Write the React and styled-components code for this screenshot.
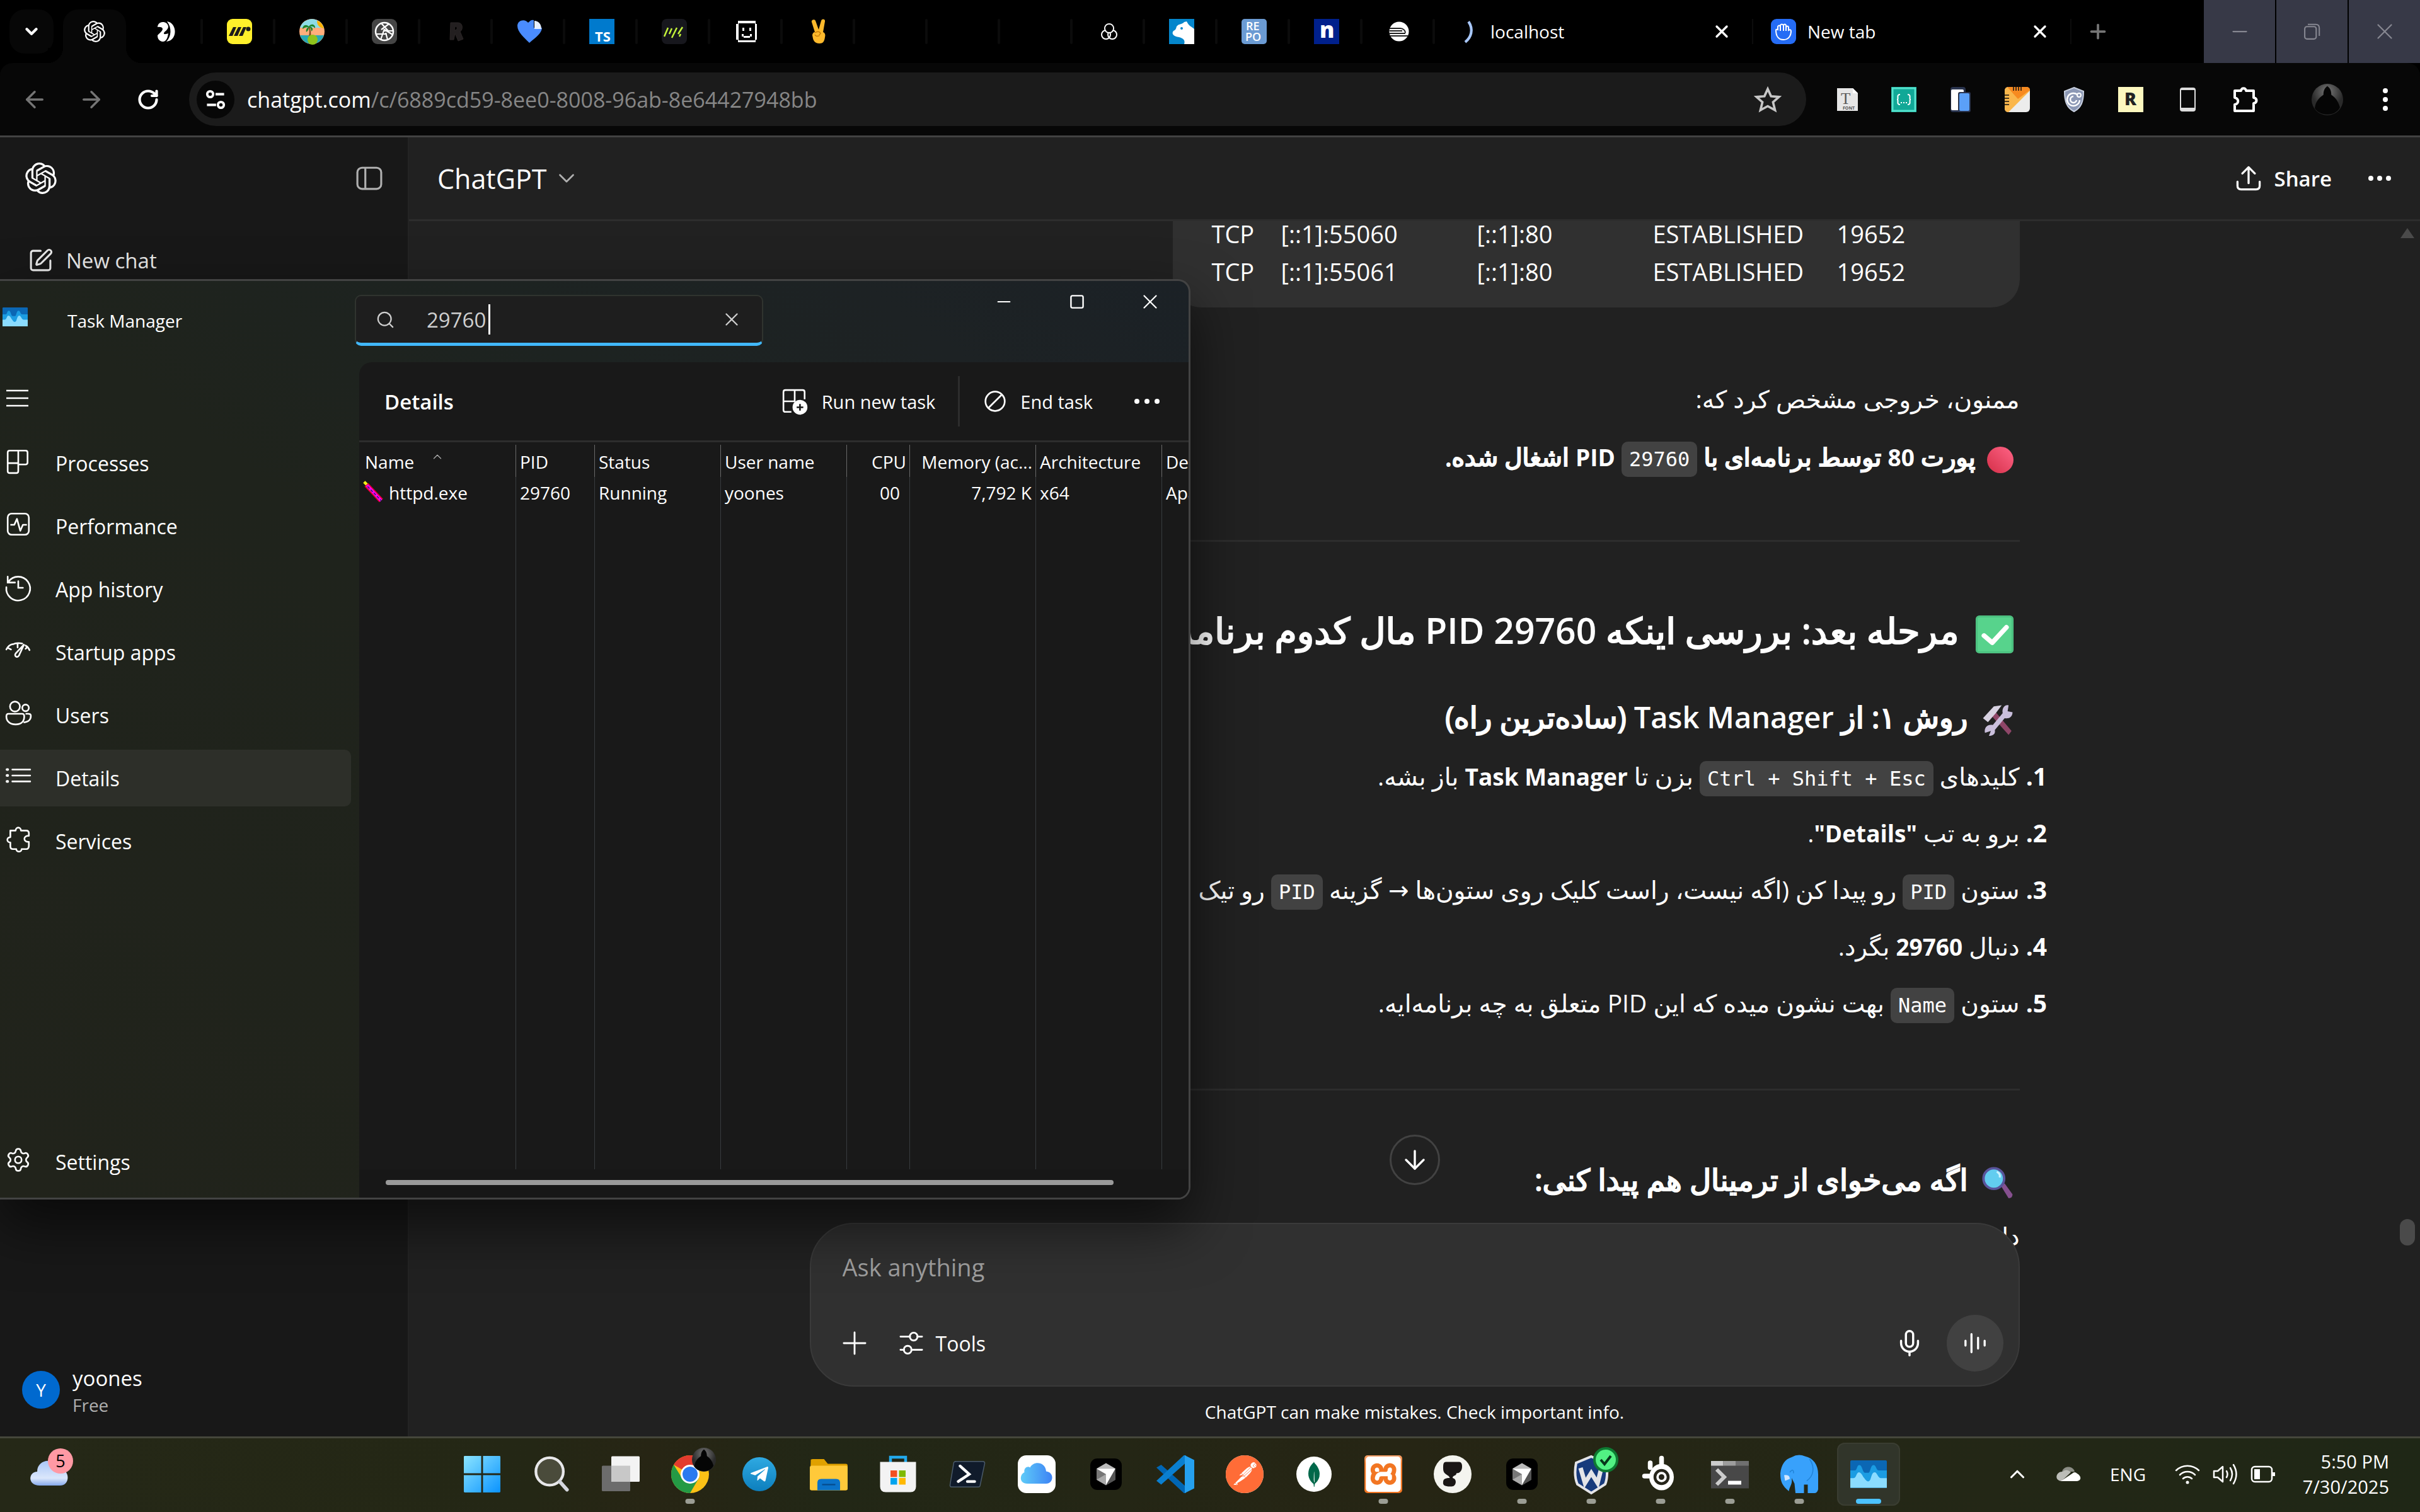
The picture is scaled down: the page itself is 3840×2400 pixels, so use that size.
import React from 'react';
import styled, { createGlobalStyle, css } from 'styled-components';
import {
  ChevronDown, ChevronUp, ArrowLeft, ArrowRight, ArrowDown, X, Plus, Minus, Search,
  Star, RotateCw, Mic, Settings, SquarePen,
} from 'lucide-react';
import { SiOpenai, SiPostman, SiMongodb, SiXampp } from 'react-icons/si';
import { FaTelegramPlane } from 'react-icons/fa';

const GlobalStyle = createGlobalStyle`
  *, *::before, *::after { box-sizing: border-box; }
  body {
    margin: 0;
    background: #000;
    color: #fff;
    font-family: "Open Sans", "Noto Sans", "DejaVu Sans", sans-serif;
    font-size: 33px;
    overflow: hidden;
  }
  button, input, textarea { font: inherit; color: inherit; }
  svg { display: block; flex: none; overflow: visible; }
`;

const Desktop = styled.div`
  position: relative;
  display: flex;
  flex-direction: column;
  min-height: 100vh;
  overflow: hidden;
`;

const PlainButton = styled.button`
  display: flex;
  align-items: center;
  justify-content: center;
  padding: 0;
  border: 0;
  background: none;
  cursor: pointer;
`;

/* ---------- Browser tab strip ---------- */

const TabStrip = styled.header`
  display: flex;
  height: 100px;
  background: #000;
`;

const TabSearchCell = styled.div`
  display: flex;
  align-items: center;
  justify-content: center;
  width: 100px;
`;

const TabSearchButton = styled(PlainButton)`
  width: 70px;
  height: 70px;
  border-radius: 24px;
  background: #070707;
`;

const Tabs = styled.nav`
  display: flex;
  flex: 1;
`;

const PinnedTab = styled(PlainButton)`
  position: relative;
  width: 115px;
  height: 100px;

  &::after {
    content: '';
    position: absolute;
    right: 0;
    top: 30px;
    width: 4px;
    height: 40px;
    border-radius: 2px;
    background: #0b0b0b;
  }
`;

const ActiveTab = styled(PlainButton)`
  position: relative;
  width: 100px;
  height: 85px;
  margin: 15px 7px 0 0;
  padding-bottom: 15px;
  border-radius: 24px 24px 0 0;
  background: #070707;

  &::before, &::after {
    content: '';
    position: absolute;
    bottom: 0;
    width: 24px;
    height: 24px;
  }
  &::before { right: 100%; background: radial-gradient(circle at 0 0, #000 24px, #070707 24px); }
  &::after { left: 100%; background: radial-gradient(circle at 100% 0, #000 24px, #070707 24px); }
`;

const WideTab = styled.div`
  display: flex;
  align-items: center;
  width: 505px;
  padding: 0 32px 0 28px;
  border-right: 2px solid #0b0b0b;
  border-image: linear-gradient(#000 30%, #0c0c0c 30%, #0c0c0c 70%, #000 70%) 1;
  font-size: 28px;
  gap: 18px;

  span { flex: 1; }
`;

const NewTabButton = styled(PlainButton)`
  width: 84px;
  color: #757575;
`;

const WindowButtons = styled.div`
  display: flex;
  gap: 2px;
`;

const WindowButton = styled(PlainButton)`
  width: 113px;
  height: 100px;
  background: #373947;
  color: #868791;
`;

/* ---------- Browser toolbar ---------- */

const Toolbar = styled.div`
  display: flex;
  align-items: center;
  height: 118px;
  padding: 0 12px 3px 10px;
  border-radius: 20px 20px 0 0;
  background: #070707;
  box-shadow: inset 0 -3px #424242;
`;

const ToolButton = styled(PlainButton)`
  width: 90px;
  height: 85px;
  color: ${(p) => (p.$muted ? '#757575' : '#fff')};
`;

const Omnibox = styled.div`
  display: flex;
  align-items: center;
  flex: 1;
  height: 85px;
  margin: 0 20px;
  padding: 0 40px 0 12px;
  gap: 20px;
  border-radius: 43px;
  background: #1b1b1b;
`;

const SiteInfo = styled(PlainButton)`
  width: 60px;
  height: 60px;
  border-radius: 50%;
  background: #070707;
`;

const Url = styled.a`
  flex: 1;
  color: #868686;
  font-size: 34px;
  text-decoration: none;

  b { color: #fff; font-weight: 400; }
`;

const ProfileButton = styled(PlainButton)`
  width: 98px;
  margin-left: 38px;
`;

const MenuButton = styled(PlainButton)`
  width: 86px;
`;

/* ---------- Chat page ---------- */

const Page = styled.div`
  display: flex;
  flex: 1;
  min-height: 0;
  background: #212121;
`;

const Sidebar = styled.aside`
  display: flex;
  flex-direction: column;
  width: 649px;
  border-right: 2px solid #242424;
  background: #181818;
`;

const SidebarTop = styled.div`
  display: flex;
  align-items: center;
  justify-content: space-between;
  height: 130px;
  padding: 0 40px;
`;

const NewChat = styled.a`
  display: flex;
  align-items: center;
  gap: 20px;
  height: 90px;
  margin-top: 20px;
  padding: 0 44px;
  color: #e8e8e8;
  text-decoration: none;
`;

const Account = styled(PlainButton)`
  justify-content: flex-start;
  gap: 20px;
  margin-top: auto;
  padding: 0 35px 32px;
  text-align: left;
`;

const Avatar = styled.span`
  display: flex;
  align-items: center;
  justify-content: center;
  width: 60px;
  height: 60px;
  border-radius: 50%;
  background: #0069cf;
  font-size: 28px;
`;

const AccountText = styled.span`
  display: flex;
  flex-direction: column;
  line-height: 48px;

  small {
    color: #afafaf;
    font-size: 28px;
    line-height: 36px;
  }
`;

const Main = styled.main`
  position: relative;
  display: flex;
  flex-direction: column;
  flex: 1;
  min-width: 0;
`;

const MainHeader = styled.div`
  display: flex;
  align-items: center;
  justify-content: space-between;
  height: 133px;
  padding: 0 46px 0 45px;
  border-bottom: 3px solid #2d2d2d;
`;

const ModelButton = styled(PlainButton)`
  gap: 10px;
  font-size: 43px;
`;

const HeaderActions = styled.div`
  display: flex;
  gap: 58px;
`;

const ShareButton = styled(PlainButton)`
  gap: 18px;
  font-weight: 600;
`;

const Scroller = styled.div`
  position: relative;
  display: flex;
  justify-content: center;
  flex: 1;
  min-height: 0;
  overflow: hidden;
`;

const Thread = styled.article`
  width: 100%;
  max-width: 1920px;
  height: 0;
  font-size: 38px;
`;

const Bubble = styled.div`
  display: flex;
  flex-direction: column;
  gap: 20px;
  width: 70%;
  margin: 0 0 110px auto;
  padding: 0 62px 37px;
  border-radius: 0 0 45px 45px;
  background: #303030;
`;

const BubbleRow = styled.div`
  display: grid;
  grid-template-columns: 110px 311px 279px 292px 1fr;
  line-height: 40px;
`;

const faText = css`
  font-family: "Open Sans", "DejaVu Sans", sans-serif;
`;

const Rtl = styled.div`
  ${faText}
  direction: rtl;
  font-size: 39px;
  line-height: 70px;
  white-space: nowrap;
`;

/* Persian letters are thickened with a stroke; Latin runs inside use a true bold face. */
const heavy = css`
  font-weight: 400;
  -webkit-text-stroke: 2px currentColor;
`;

const En = styled.b`
  font-size: ${(p) => p.$size || 37}px;
  font-weight: ${(p) => p.$weight || 700};
  -webkit-text-stroke: 0;
`;

const Para = styled.p`
  height: 70px;
  margin: 0 0 22px;
  ${(p) => p.$bold && heavy}
`;

const Rule = styled.hr`
  height: 3px;
  margin: ${(p) => p.$top || 97}px 0 ${(p) => p.$bottom || 100}px;
  border: 0;
  background: #2d2d2d;
`;

const Title = styled.h2`
  height: 80px;
  margin: 0 0 63px;
  font-size: 57px;
  line-height: 80px;
  ${heavy}
`;

const Subtitle = styled.h3`
  height: 70px;
  margin: 0 0 ${(p) => p.$gap || 24}px;
  font-size: 47px;
  ${heavy}
`;

const Emoji = styled.svg`
  display: inline-block;
  width: ${(p) => p.$size || 50}px;
  height: ${(p) => p.$size || 50}px;
  margin: 0 10px 0 ${(p) => p.$gap || 22}px;
  vertical-align: middle;
`;

const Steps = styled.ol`
  display: flex;
  flex-direction: column;
  gap: 20px;
  margin: 0;
  padding: 0;
  list-style-position: outside;
`;

const Step = styled.li`
  height: 70px;
  &::marker { font-weight: 700; }
`;

const Code = styled.code`
  padding: 9px 12px;
  border-radius: 10px;
  background: #424242;
  font-family: "DejaVu Sans Mono", "Liberation Mono", monospace;
  font-size: 32px;
  font-weight: 400;
  line-height: 32px;
  direction: ltr;
  unicode-bidi: isolate;
  -webkit-text-stroke: 0;
`;

const ScrollRail = styled.div`
  position: absolute;
  top: 0;
  right: 0;
  bottom: 210px;
  display: flex;
  flex-direction: column;
  align-items: center;
  width: 40px;
  padding-top: 10px;
  color: #4a4a4a;
`;

const ScrollThumb = styled.div`
  width: 24px;
  height: 42px;
  margin: 1556px 0 auto;
  border-radius: 12px;
  background: #4a4a4a;
`;

const Dock = styled.div`
  position: absolute;
  left: 0;
  right: 0;
  bottom: 0;
  display: flex;
  flex-direction: column;
  align-items: center;
`;

const ScrollDown = styled(PlainButton)`
  width: 80px;
  height: 80px;
  margin-bottom: 60px;
  border: 3px solid #424242;
  border-radius: 50%;
  background: #212121;
`;

const Composer = styled.form`
  display: flex;
  flex-direction: column;
  justify-content: space-between;
  width: 100%;
  max-width: 1920px;
  height: 260px;
  padding: 38px 24px 22px 50px;
  border: 2px solid #3a3a3a;
  border-radius: 70px;
  background: #303030;
`;

const Prompt = styled.input`
  width: 100%;
  height: 60px;
  padding: 0;
  border: 0;
  outline: 0;
  background: none;
  font-size: 38px;

  &::placeholder { color: #9e9e9e; opacity: 1; }
`;

const ComposerRow = styled.div`
  display: flex;
  align-items: center;
  height: 90px;
  gap: 52px;
`;

const ToolsButton = styled(PlainButton)`
  gap: 20px;
  margin-right: auto;
  font-size: 32px;
`;

const VoiceButton = styled(PlainButton)`
  width: 90px;
  height: 90px;
  margin-left: -16px;
  border-radius: 50%;
  background: #414141;
`;

const Disclaimer = styled.p`
  height: 79px;
  margin: 0;
  font-size: 28px;
  line-height: 80px;
`;

/* ---------- Task Manager window ---------- */

const TaskWindow = styled.section`
  position: absolute;
  left: 0;
  top: 443px;
  display: flex;
  flex-direction: column;
  width: 1889px;
  height: 1461px;
  border: 3px solid #434343;
  border-left: 0;
  border-radius: 0 20px 20px 0;
  background: linear-gradient(to bottom left, #1b2126 0, #1d2224 14%, #1d2321 30%, #1f231c 50%, #21231b 100%);
  box-shadow: 0 40px 90px rgba(0, 0, 0, 0.6);
  overflow: hidden;
`;

const TitleBar = styled.div`
  display: flex;
  align-items: flex-start;
  height: 129px;
`;

const AppName = styled.div`
  display: flex;
  align-items: center;
  gap: 63px;
  width: 563px;
  height: 126px;
  padding-left: 4px;
  font-size: 28px;

  svg { margin-bottom: 12px; }
`;

const SearchField = styled.label`
  display: flex;
  align-items: center;
  width: 648px;
  height: 81px;
  margin-top: 22px;
  padding: 0 31px;
  border: 2px solid #30342f;
  border-bottom: 5px solid #41b8fb;
  border-radius: 10px;
  background: #1e1e1e;
  color: #cfcfcf;
`;

const SearchInput = styled.input`
  width: 98px;
  margin-left: 50px;
  padding: 0;
  border: 0;
  outline: 0;
  background: none;
`;

const Caret = styled.span`
  width: 3px;
  height: 48px;
  background: #fff;
`;

const ClearButton = styled(PlainButton)`
  margin-left: auto;
`;

const Caption = styled.div`
  display: flex;
  margin-left: auto;
  padding-right: 3px;
`;

const CaptionButton = styled(PlainButton)`
  width: 116px;
  height: 66px;
`;

const WindowBody = styled.div`
  display: flex;
  flex: 1;
  min-height: 0;
`;

const SideNav = styled.nav`
  display: flex;
  flex-direction: column;
  gap: 10px;
  width: 570px;
  padding-bottom: 12px;
  font-size: 32px;
`;

const NavItem = styled.button`
  display: flex;
  align-items: center;
  gap: 38px;
  width: 557px;
  height: 90px;
  margin-top: ${(p) => (p.$last ? 'auto' : 0)};
  padding: 0 8px;
  border: 0;
  border-radius: 0 10px 10px 0;
  background: ${(p) => (p.$active ? '#2d2f29' : 'transparent')};
  cursor: pointer;

  svg { margin-bottom: 6px; }
`;

const MenuItem = styled(NavItem)`
  height: 105px;
  padding-top: 14px;
`;

const DetailsPane = styled.div`
  display: flex;
  flex-direction: column;
  flex: 1;
  min-width: 0;
  border-radius: 20px 0 0 0;
  background: #191919;
  overflow: hidden;
`;

const PaneBar = styled.div`
  display: flex;
  align-items: center;
  height: 127px;
  padding: 0 46px 0 40px;
  border-bottom: 3px solid #2d2d2d;
`;

const PaneTitle = styled.h1`
  margin: 0 auto 0 0;
  font-size: 33px;
  font-weight: 600;
`;

const PaneAction = styled(PlainButton)`
  gap: 22px;
  font-size: 29px;
`;

const PaneDivider = styled.span`
  width: 3px;
  height: 80px;
  margin: 0 38px 0 36px;
  background: #2d2d2d;
`;

const MoreButton = styled(PlainButton)`
  margin-left: 66px;
`;

const TableArea = styled.div`
  flex: 1;
  min-height: 0;
  padding-top: 4px;
  overflow: hidden;
`;

const ProcessTable = styled.table`
  width: 1473px;
  height: 100%;
  table-layout: fixed;
  border-collapse: separate;
  border-spacing: 0;
  font-size: 28px;
  white-space: nowrap;
`;

const Head = styled.th`
  height: 51px;
  padding: 3px 5px 0 6px;
  border-right: 1px solid #6a6a6a;
  font-weight: 400;
  text-align: ${(p) => (p.$num ? 'right' : 'left')};
`;

const Cell = styled.td`
  height: ${(p) => (p.$fill ? 'auto' : '50px')};
  padding: 0 ${(p) => p.$padRight || 6}px 0 6px;
  border-right: 1px solid #383c3f;
  text-align: ${(p) => (p.$num ? 'right' : 'left')};
`;

const NameHead = styled.span`
  display: flex;
  align-items: flex-start;
  gap: 26px;
  padding-left: 3px;
`;

const ProcessName = styled.span`
  display: flex;
  align-items: center;
  gap: 5px;
`;

const HScroll = styled.div`
  height: 45px;
  padding: 17px 119px 0 42px;
  background: #171717;

  &::before {
    content: '';
    display: block;
    height: 8px;
    border-radius: 4px;
    background: #9a9a9a;
  }
`;

/* ---------- Taskbar ---------- */

const Taskbar = styled.footer`
  display: flex;
  align-items: center;
  justify-content: space-between;
  height: 120px;
  padding: 0 49px 3px 47px;
  border-top: 3px solid #45473b;
  background: linear-gradient(90deg, #252817 0, #242715 22%, #272514 27%, #222716 34%, #262514 58%, #242716 78%, #1f2716 100%);
`;

const Widget = styled(PlainButton)`
  width: 70px;
  padding-bottom: 22px;
`;

const Apps = styled.div`
  display: flex;
  margin-left: 598px;
  margin-right: auto;
`;

const AppButton = styled(PlainButton)`
  position: relative;
  width: 100px;
  height: 100px;
  margin-right: 10px;
  border-radius: 12px;
  ${(p) => p.$active && css`
    background: #31352a;
    box-shadow: inset 0 0 0 2px #3a3d31;
  `}

  &::after {
    content: '';
    position: absolute;
    left: 50%;
    bottom: 3px;
    width: ${(p) => (p.$active ? 40 : 15)}px;
    height: 8px;
    transform: translateX(-50%);
    border-radius: 4px;
    background: ${(p) => (p.$active ? '#4cc2ff' : p.$running ? '#9b9d94' : 'transparent')};
  }
`;

const Tray = styled.div`
  display: flex;
  align-items: center;
  font-size: 28px;
`;

const TrayItem = styled(PlainButton)`
  margin-right: ${(p) => p.$gap || 20}px;
`;

const Clock = styled.time`
  width: 160px;
  font-size: 29px;
  line-height: 40px;
  text-align: right;
`;

/* ---------- Drawings ---------- */

const S = ({ size = 40, box = 40, children, ...rest }) => (
  <svg width={size} height={size} viewBox={`0 0 ${box} ${box}`} fill="none" aria-hidden="true" {...rest}>{children}</svg>
);

const favicons = [
  ['Loop', <S><path d="M5 13C6 2 21 3 22 12c0 6-7 8-7 11 0 2 4 1 7 0-1 8-4 13-8 13-6 0-9-4-9-10 3-3 8-7 8-10s-5-4-8-3z" fill="#fff" /><path d="M20 4c16 2 18 30-1 32 8-8 9-22 1-32z" fill="#fff" /></S>],
  ['Miro', <S><rect width="40" height="40" rx="9" fill="#fff02b" /><path d="m3 27 7-14h5L9 27zm8 0 7-14h5l-6 14zm8 0 7-14h5l-6 14z" fill="#1b1b1b" /><circle cx="34" cy="16" r="3.500" fill="#1b1b1b" /></S>],
  ['Island', <S><circle cx="20" cy="20" r="20" fill="#ffae7c" /><path d="M1 14a20 20 0 0 1 38 0z" fill="#8cdbe6" /><path d="M28 3c6 1 9 6 11 12-7-1-11-5-11-12z" fill="#ffb300" /><path d="M1 26h38a20 20 0 0 1-38 0z" fill="#28a7b5" /><path d="M14 12c3 5 2 14 0 19h4c1-8 0-14-2-19z" fill="#7a4a20" /><path d="M15 12c-5-5-10-1-10 4 3-2 6-3 9-3-3 2-4 5-3 8 3-2 4-5 4-8 3 1 4 4 4 7 4-3 2-7-2-8 3-1 6 0 8 3 1-6-6-9-10-3z" fill="#20852c" /><circle cx="21" cy="33" r="8" fill="#8fc31c" /></S>],
  ['Aperture', <S><rect width="40" height="40" rx="9" fill="#454545" /><circle cx="20" cy="20" r="14" stroke="#fff" strokeWidth="2.500" /><path d="m15 7 11 12M27 8 15 17m18 2H18m15 6-13-8M14 33l6-17M7 24h17m-2-2 3 11" stroke="#fff" strokeWidth="2.200" /></S>],
  ['Rockstar', <S><path d="M10 6h12c8 0 8 12 3 14l5 12-8 3-5-12-2 10H9zm7 6-1 6c5 0 6-6 1-6z" fill="#231f20" stroke="#2b2626" /></S>],
  ['Heart', <S><path d="M20 38C12 30 1 21 1 11 1 2 13-1 18 6c4-4 6-5 9-4v12h13c0 9-12 17-20 24z" fill="#4a8cff" /><path d="M28 3v13h11C39 8 34 3 28 3z" fill="#e6efff" /></S>],
  ['TypeScript', <S><rect width="40" height="40" fill="#007acd" /><text x="9" y="36" fill="#fff" fontFamily="Open Sans" fontWeight="700" fontSize="22">TS</text></S>],
  ['Lines', <S><rect width="40" height="40" rx="8" fill="#17171d" /><path d="m4 28 6-14m2 10 4-9m0 15 8-16m2 10 7-11m-5 15 2-4" stroke="#c4f43a" strokeWidth="2.500" /></S>],
  ['Pixel', <S><path d="M6 3h28v5h2v25h-2v4H6v-4H3V8h3z" fill="#fff" /><path d="M7 7h26v27H7z" fill="#000" /><path d="M13 14h3v5h-3zm11 0h3v5h-3zM12 24h3v3h10v-3h3v4h-3v2H15v-2h-3z" fill="#fff" /></S>],
  ['Victory', <S><path d="M13 21 8 5c-1-4 5-5 6-2l5 14 4-14c1-4 7-3 6 1l-3 17c3 1 4 4 3 8-1 7-3 10-9 10-5 0-9-3-10-8l-1-5c0-3 2-5 4-5z" fill="#fdb92c" /><path d="M13 22c4-3 8-2 9 1-2 2-3 3-3 5m-6-3c1 2 3 3 5 2" stroke="#c67c08" strokeWidth="1.500" /></S>],
  ['Blank one', null],
  ['Blank two', null],
  ['Blank three', null],
  ['Rings', <S><g stroke="#fff" strokeWidth="2"><circle cx="20" cy="15" r="7" /><circle cx="15" cy="25" r="7" /><circle cx="25" cy="25" r="7" /></g><circle cx="20" cy="15" r="6" fill="#000" /></S>],
  ['Bear', <S><rect width="40" height="40" fill="#0486cc" /><path d="M40 40H24c2-6-1-9-8-11-8-1-13-5-9-10 3-1 4-3 5-7 4-5 9-3 12-7l4-1c2 4 4 7 8 9l4 3z" fill="#fff" /><circle cx="20" cy="15" r="2" fill="#0486cc" /></S>],
  ['Repo', <S><rect width="40" height="40" rx="5" fill="#6b9bd3" /><text x="7" y="18" fill="#fff" fontFamily="Open Sans" fontWeight="600" fontSize="18">RE</text><text x="6" y="35" fill="#fff" fontFamily="Open Sans" fontWeight="600" fontSize="18">PO</text></S>],
  ['Notes', <S><rect width="40" height="40" fill="#00208c" /><text x="9" y="30" fill="#fff" fontFamily="Open Sans" fontWeight="800" fontSize="35">n</text></S>],
  ['Rail', <S><circle cx="20" cy="20" r="15.500" fill="#fff" /><path d="M5 15h17c5 0 8 4 8 7M5 19h20M5 23h25M6 27h28" stroke="#222" strokeWidth="2" /></S>],
];

const extensions = [
  ['Font finder', <S><path d="M4 2h25l8 8v28H4z" fill="#e6e6e6" /><path d="M29 2v8h8z" fill="#fff" /><text x="10" y="27" fill="#555" fontFamily="Liberation Serif" fontSize="25">T</text><text x="13" y="36" fill="#555" fontFamily="Open Sans" fontWeight="700" fontSize="7">FONT</text></S>],
  ['JSON viewer', <S><rect width="40" height="40" fill="#11a897" /><rect x="2" y="2" width="36" height="36" stroke="#55e2cd" strokeWidth="3" /><path d="M14 12c-7 0-1 8-5 8 4 0-2 8 5 8m12-16c7 0 1 8 5 8-4 0 2 8-5 8" stroke="#fff" strokeWidth="2" /><path d="M15 25h2m2 0h2m2 0h2" stroke="#fff" strokeWidth="2" /></S>],
  ['Responsive', <S><rect x="4" width="24" height="40" rx="4" fill="#29334d" /><rect x="5" y="4" width="20" height="33" rx="2" fill="#fff" /><rect x="16" y="8" width="20" height="32" rx="3" fill="#29334d" /><rect x="18" y="10" width="16" height="28" rx="2" fill="#5ba0f8" /></S>],
  ['Ruler', <S><rect width="40" height="40" rx="6" fill="#ececec" /><path d="M6 0h28q6 0 6 6L6 40q-6 0-6-6V6q0-6 6-6z" fill="#fab64b" /><path d="M4 0h30q6 0 6 5L21 19z" fill="#f78a20" /><path d="M14 0v6m4-6v6m4-6v6m4-6v6M0 13h7M0 18h7M0 23h7M0 28h7" stroke="#111" strokeWidth="1.500" /></S>],
  ['Shield', <S><path d="m20 1 15 6c0 15-3 26-15 32C8 33 5 22 5 7z" fill="#8c98b5" stroke="#c7cfdf" strokeWidth="2" /><path d="M25 12a10 10 0 1 0 4 9M19 15a5 5 0 1 0 5 6" stroke="#fff" strokeWidth="2.500" /><circle cx="28" cy="13" r="3" stroke="#fff" strokeWidth="2" /></S>],
  ['Reader', <S><rect width="40" height="40" fill="#fdf8bf" /><text x="10" y="29" fill="#222" fontFamily="Open Sans" fontWeight="800" fontSize="28">R</text></S>],
  ['Mobile view', <S><rect x="8" y="1" width="25" height="38" rx="4" fill="#dcdcdc" /><path d="M10 5h21v28H10z" fill="#080808" /></S>],
  ['Extensions', <S><path d="M5 6h10c0-5 8-5 8 0h12v11c6 1 6 8 0 9v12H5V28c7-1 7-10 0-11z" stroke="#fff" strokeWidth="4" strokeLinejoin="round" /></S>],
];

const Hooded = ({ size = 50 }) => (
  <S size={size}><defs><radialGradient id={`hood${size}`} cy="25%"><stop offset="0" stopColor="#777" /><stop offset="1" stopColor="#2a2a2a" /></radialGradient></defs><circle cx="20" cy="20" r="20" fill={`url(#hood${size})`} /><path d="M20 3c3 2 5 5 5 11 6 4 9 9 11 16-3 6-9 9-16 9S7 36 4 31c1-8 5-13 11-17 0-6 2-9 5-11z" fill="#050505" /></S>
);

const Dots = ({ vertical, r = 4, gap = 14 }) => {
  const len = gap * 2 + r * 2;
  return (
    <svg width={vertical ? r * 2 : len} height={vertical ? len : r * 2} fill="#fff" aria-hidden="true">
      {[0, 1, 2].map((i) => <circle key={i} cx={vertical ? r : r + gap * i} cy={vertical ? r + gap * i : r} r={r} />)}
    </svg>
  );
};

const TMLogo = ({ size = 56 }) => (
  <svg width={size} height={size * 0.75} viewBox="0 0 60 46" preserveAspectRatio="none" aria-hidden="true">
    <rect width="60" height="46" rx="2" fill="#0b67b4" />
    <path d="M0 17h7c5 0 3-9 8-9s5 13 9 13h6c3 0 3-13 8-13s4 9 9 9h13v29H0z" fill="#1b9ce2" />
    <path d="M0 30h5c5 0 5-10 9-10s6 6 9 10c3 5 7 8 10 2 2-6 3-12 7-12s5 9 10 10h10v16H0z" fill="#8bdcff" />
  </svg>
);

const navIcons = {
  Processes: <S size={42} stroke="#fff" strokeWidth="2.500"><path d="M6 4h25q3 0 3 3v15q0 3-3 3H20v10q0 3-3 3H7q-3 0-3-3V7q0-3 3-3zM20 4v21M4 23h16" /></S>,
  Performance: <S size={42} stroke="#fff" strokeWidth="2.500" strokeLinejoin="round"><rect x="4" y="4" width="32" height="32" rx="6" /><path d="M8 21h6l4-9 5 18 4-9h6" /></S>,
  'App history': <S size={42} stroke="#fff" strokeWidth="2.500" strokeLinecap="round"><path d="M4 4v9h11M5 12A18 18 0 1 1 2 20m18-9v10h7" /></S>,
  'Startup apps': <S size={42} stroke="#fff" strokeWidth="2.500" strokeLinecap="round"><path d="M2 19c2-4 5-7 9-8m-6 6 4 2m3-8c4-2 9-2 14-1m-7 0v6m12-3c3 2 5 4 6 7m-6-2 3-3M29 11l-7 15c-2 7-9 4-6-1z" /></S>,
  Users: <S size={42} stroke="#fff" strokeWidth="2.500"><circle cx="15" cy="10" r="7.500" /><circle cx="31" cy="12" r="5" /><path d="M5 21h21q3 0 3 4c0 7-4 12-13 12S2 32 2 25q0-4 3-4zm26 0h4q4 0 4 3c0 6-3 9-11 10" /></S>,
  Details: <S size={42} stroke="#fff" strokeWidth="2.500" strokeLinecap="round"><path d="M11 10h27M11 19h27M11 28h27" /><path d="M3 10h1M3 19h1M3 28h1" strokeWidth="4" /></S>,
  Services: <S size={42} stroke="#fff" strokeWidth="2.500" strokeLinejoin="round"><path d="M8 7h8c0-6 8-6 8 0h8q4 0 4 4v4c-9-1-9 10 0 9v6q0 5-4 5h-7c0 5-8 5-8 0H12q-4 0-4-4v-6c-6 0-6-8 0-8V11z" /></S>,
};

const AddTask = () => <S size={42} stroke="#fff" strokeWidth="2.500"><path d="M15 36H6q-3 0-3-3V6q0-3 3-3h26q3 0 3 3v11M20 3v17H3" /><circle cx="28" cy="29" r="10" fill="#fff" /><path d="M28 24v10m-5-5h10" stroke="#191919" /></S>;

const Cube = () => <S size={50}><rect width="40" height="40" rx="9" fill="#000" /><path d="M20 6 8 13v14l12 7 12-7V13z" fill="#777" /><path d="m20 6 12 7H8z" fill="#bbb" /><path d="M8 27 20 20v14z" fill="#aaa" /><path d="M8 13h24L20 34V20z" fill="#fff" /><path d="M32 13v14l-12 7z" fill="#555" /></S>;

const Disc = styled.span`
  display: flex;
  align-items: center;
  justify-content: center;
  width: ${(p) => p.$size}px;
  height: ${(p) => p.$size}px;
  border-radius: ${(p) => p.$radius || '50%'};
  background: ${(p) => p.$bg};
  color: ${(p) => p.$fg || '#fff'};
`;

const apps = [
  ['Start', <S size={58}><defs><linearGradient id="win" x1="0" y1="0" x2="1" y2="1"><stop stopColor="#8be4ff" /><stop offset="1" stopColor="#0a93ff" /></linearGradient></defs><path d="M1 0h18v19H0V1q0-1 1-1zm20 0h18q1 0 1 1v18H21zM0 21h19v19H1q-1 0-1-1zm21 0h19v18q0 1-1 1H21z" fill="url(#win)" /></S>],
  ['Search', <S size={58}><circle cx="18" cy="17" r="15" fill="#4a4b3b" stroke="#e8e8ea" strokeWidth="3" /><path d="m29 28 8 9" stroke="#d4d6de" strokeWidth="4" strokeLinecap="round" /></S>],
  ['Task view', <S size={60}><rect x="0" y="11" width="30" height="27" rx="1" fill="#6c6c6c" /><rect x="10" y="1" width="30" height="27" rx="1" fill="#f3f3f3" /><path d="M10 11h20v17H10z" fill="#c8c8c8" /></S>],
  ['Chrome', <svg width="76" height="60" viewBox="0 0 76 60"><circle cx="38" cy="30" r="30" fill="#fbc116" /><path d="M38 30 12 15a30 30 0 0 1 52 0z" fill="#e33b2e" /><path d="M12 15a30 30 0 0 0 26 45l14-24H25z" fill="#249a45" /><circle cx="38" cy="30" r="15" fill="#fff" /><circle cx="38" cy="30" r="12" fill="#2a7af0" /><g transform="translate(41 -12)"><Hooded size={38} /></g></svg>, 1],
  ['Telegram', <Disc $size={54} $bg="linear-gradient(#2fa9e2,#0d7fbd)"><FaTelegramPlane size={32} /></Disc>],
  ['Files', <S size={60}><path d="M1 5q0-1 2-1h12l4 5h19q2 0 2 2v24q0 2-2 2H2q-2 0-2-2z" fill="#e0a100" /><rect y="11" width="40" height="26" rx="2" fill="#ffc93a" /><path d="M8 37v-8q0-4 4-4h16q4 0 4 4v8z" fill="#0a72c8" /><path d="M13 31h14" stroke="#054a8c" strokeWidth="1.500" /></S>],
  ['Store', <S size={60}><path d="M12 9V2h16v7" stroke="#22a9ec" strokeWidth="3" /><path d="M1 7h38v26q0 6-6 6H7q-6 0-6-6z" fill="#f3f3f3" /><path d="M12 16h7v7h-7z" fill="#f25022" /><path d="M21 16h7v7h-7z" fill="#7fba00" /><path d="M12 24h7v7h-7z" fill="#00a4ef" /><path d="M21 24h7v7h-7z" fill="#ffb900" /></S>],
  ['PowerShell', <S size={58}><path d="M6 6h31q2 0 2 2l-5 24q0 2-3 2H3q-2 0-2-2L5 8q0-2 3-2z" fill="#101b2b" stroke="#4b5b6b" /><path d="m12 11 10 9-12 8m10 0h8" stroke="#fff" strokeWidth="3" strokeLinecap="round" /></S>],
  ['iCloud', <S size={60}><rect width="40" height="40" rx="9" fill="#fff" /><defs><linearGradient id="ic"><stop stopColor="#5ecbf8" /><stop offset="1" stopColor="#3d83f5" /></linearGradient></defs><path d="M10 30c-9 0-8-10-3-12-1-5 4-7 6-5 3-7 16-7 17 4 9 1 8 13 0 13z" fill="url(#ic)" /></S>],
  ['Cursor', <Cube />],
  ['VS Code', <S size={60}><path d="m0 13 5-3 26 23v7h-2z" fill="#0066b5" /><path d="m0 27 5 4L31 8V0h-2z" fill="#0a7fd0" /><path d="m30 0 10 5v30l-10 5z" fill="#25a0ef" /></S>],
  ['Postman', <Disc $size={60} $bg="#fff" $fg="#ff6c37"><SiPostman size={60} /></Disc>],
  ['MongoDB', <Disc $size={56} $bg="#fff" $fg="#00684a"><SiMongodb size={40} /></Disc>],
  ['XAMPP', <Disc $size={60} $radius="5px" $bg="linear-gradient(#f4a06a,#f27623 22%)"><SiXampp size={56} /></Disc>, 1],
  ['Question', <Disc $size={60} $bg="#f4f4ef"><S size={60}><path d="M13 7h14q3 0 3 5c0 5-3 7-6 7 0 3-4 2-4 5 5 1 4 9-1 9s-10 0-9-5c0-3 3-4 7-4-1-4-7-3-7-10 0-4 0-7 3-7z" fill="#1a1615" /></S></Disc>],
  ['Cursor window', <Cube />, 1],
  ['WakaTime', <svg width="60" height="76" viewBox="0 0 60 76"><path d="m30 10 24 10q3 22-2 34L30 68 8 54Q2 40 6 20z" fill="#173a7c" stroke="#e4e4e8" strokeWidth="4" /><path d="m13 28 7 24 10-16 10 16 6-24" stroke="#e4e4e8" strokeWidth="7" fill="none" /><circle cx="53" cy="15" r="18" fill="#52f183" stroke="#0e7a32" strokeWidth="4" /><path d="m45 15 6 7 10-13" stroke="#07361a" strokeWidth="4" fill="none" /></svg>, 1],
  ['SteelSeries', <S size={60}><ellipse cx="21" cy="23" rx="13" ry="14" fill="#fff" /><path d="M21 3v10M9 8v5M3 22h6" stroke="#fff" strokeWidth="5" strokeLinecap="round" /><circle cx="21" cy="23" r="7" fill="#fff" stroke="#26251a" strokeWidth="3" /><circle cx="21" cy="23" r="3" fill="#26251a" /></S>, 1],
  ['Terminal', <S size={60}><path d="M0 6h40v29H0z" fill="#484848" /><path d="M0 6h13v5H0z" fill="#ccc" /><path d="M13 6h13v5H13z" fill="#9d9d9d" /><path d="M26 6h14v5H26z" fill="#707070" /><path d="m6 15 8 8-8 8" stroke="#ccc" strokeWidth="4" /><path d="M18 27h14v4H18z" fill="#fff" /></S>, 1],
  ['Elephant', <S size={60}><path d="M12 2q7-4 14-1c9 2 14 9 14 19v16q-1 4-4 4h-7v-9h-4v9h-9l-1-10-3-6c1 7-2 8-3 14C2 32 0 28 0 19 1 10 5 4 12 2z" fill="#38a1fb" /><path d="M31 4c6 9 4 18-3 23m-18-9q4-5 4 1" stroke="#2082d6" /><path d="M4 21q6-1 6 4l-5 2z" fill="#cfe6ff" /></S>, 1],
  ['Task Manager', <TMLogo size={58} />, 1, 1],
];

const Wifi = () => <S stroke="#fff" strokeWidth="2.500" strokeLinecap="round"><path d="M2 14a26 26 0 0 1 36 0M8 21a17 17 0 0 1 24 0M13 27a10 10 0 0 1 14 0" /><circle cx="20" cy="33" r="2.500" fill="#fff" stroke="none" /></S>;
const Volume = () => <S stroke="#fff" strokeWidth="2.500" strokeLinecap="round" strokeLinejoin="round"><path d="M2 15h6l8-7v24l-8-7H2zM22 15q3 5 0 10M28 10q6 10 0 20M33 5q9 15 0 30" /></S>;
const Battery = () => <S stroke="#fff" strokeWidth="2.500"><rect x="2" y="8" width="32" height="24" rx="5" /><path d="M6 12h9v16H6z" fill="#fff" stroke="none" /><path d="M37 17v6" strokeWidth="4" /></S>;
const TrayCloud = () => <S><path d="M10 16c2-10 18-10 20 0" fill="#8c8e86" /><path d="M10 31C-4 30 1 15 11 16c4-4 9-3 13 1L9 31z" fill="#bcbdb8" /><path d="M8 31 26 19q4-4 8 0c7 4 7 11 0 12z" fill="#fff" /></S>;

function BrowserChrome() {
  return (
    <>
      <TabStrip>
        <TabSearchCell>
          <TabSearchButton aria-label="Search tabs"><ChevronDown size={30} strokeWidth={3.5} /></TabSearchButton>
        </TabSearchCell>
        <Tabs aria-label="Tabs">
          <ActiveTab aria-label="ChatGPT"><SiOpenai size={34} /></ActiveTab>
          {favicons.map(([name, icon]) => <PinnedTab key={name} aria-label={name}>{icon}</PinnedTab>)}
          <WideTab>
            <S size={42}><path d="M24 5c8 12 4 24-5 31" stroke="#a8c7fa" strokeWidth="4" /></S>
            <span>localhost</span>
            <PlainButton aria-label="Close localhost"><X size={32} strokeWidth={2.5} /></PlainButton>
          </WideTab>
          <WideTab>
            <S><rect width="40" height="40" rx="9" fill="#256cf5" /><path d="M8 18q0-2 3-1v-5q2-3 4 0v-2q2-3 5 0v0q2-3 4 0v3q3-3 4 0v5q3-2 4 1c0 8-4 14-12 14S8 27 8 18zm7-6v7m5-9v9m4-9v9" stroke="#fff" strokeWidth="2" /></S>
            <span>New tab</span>
            <PlainButton aria-label="Close New tab"><X size={32} strokeWidth={2.5} /></PlainButton>
          </WideTab>
          <NewTabButton aria-label="Open new tab"><Plus size={36} strokeWidth={2.5} /></NewTabButton>
        </Tabs>
        <WindowButtons>
          <WindowButton aria-label="Minimize browser"><Minus size={36} strokeWidth={1.5} /></WindowButton>
          <WindowButton aria-label="Restore browser">
            <S size={28} stroke="currentColor" strokeWidth="3"><rect x="3" y="9" width="26" height="28" rx="5" /><path d="M10 4h18q8 0 8 8v18" /></S>
          </WindowButton>
          <WindowButton aria-label="Close browser"><X size={42} strokeWidth={1.3} /></WindowButton>
        </WindowButtons>
      </TabStrip>
      <Toolbar>
        <ToolButton $muted aria-label="Back"><ArrowLeft size={42} /></ToolButton>
        <ToolButton $muted aria-label="Forward"><ArrowRight size={42} /></ToolButton>
        <ToolButton aria-label="Reload"><RotateCw size={36} strokeWidth={2.8} /></ToolButton>
        <Omnibox>
          <SiteInfo aria-label="View site information">
            <S size={34} stroke="#fff" strokeWidth="4.500"><circle cx="10" cy="10" r="5.500" /><path d="M20 10h16M4 30h17" /><circle cx="30" cy="30" r="5.500" /></S>
          </SiteInfo>
          <Url href="#chat"><b>chatgpt.com</b>/c/6889cd59-8ee0-8008-96ab-8e64427948bb</Url>
          <PlainButton aria-label="Bookmark this page">
            <S size={42} stroke="#c7c7c7" strokeWidth="3.500" strokeLinejoin="miter"><path d="m20 4 5 11 12 1-9 8 3 12-11-6-11 6 3-12-9-8 12-1z" /></S>
          </PlainButton>
        </Omnibox>
        {extensions.map(([name, icon]) => <ToolButton key={name} aria-label={name}>{icon}</ToolButton>)}
        <ProfileButton aria-label="Profile"><Hooded /></ProfileButton>
        <MenuButton aria-label="Browser menu"><Dots vertical r={4} gap={14} /></MenuButton>
      </Toolbar>
    </>
  );
}

const CircleEmoji = () => <Emoji viewBox="0 0 32 32" $size={42} $gap={18}><defs><linearGradient id="red" x1="1" y1="0" x2="0" y2="1"><stop stopColor="#ff6486" /><stop offset="1" stopColor="#d42f48" /></linearGradient></defs><circle cx="16" cy="16" r="16" fill="url(#red)" /></Emoji>;
const CheckEmoji = () => <Emoji viewBox="0 0 32 32" $size={60} $gap={26}><rect width="32" height="32" rx="3" fill="#57d38c" /><rect x="1" y="1" width="30" height="30" rx="2" fill="none" stroke="#48bb7c" /><path d="m7 17 7 6L26 10" fill="none" stroke="#fff" strokeWidth="4" strokeLinecap="round" strokeLinejoin="round" /></Emoji>;
const ToolsEmoji = () => <Emoji viewBox="0 0 32 32"><path d="m10 12 4-4 16 19-3 4z" fill="#8e4668" /><path d="M1 14 12 2l8-1-6 8-8 9z" fill="#d8d2e2" /><path d="M3 29c-1-5 2-9 8-8L21 9c-1-5 2-9 6-8l-1 6 5 1c0 5-4 7-8 6L13 26c1 4-2 6-6 6l2-5z" fill="#c9bedb" /></Emoji>;
const LensEmoji = () => <Emoji viewBox="0 0 32 32"><path d="m19 19 4-2 8 11q0 4-4 4z" fill="#86508f" /><circle cx="12" cy="12" r="10.500" fill="#62cdf0" stroke="#59549b" strokeWidth="2.500" /><path d="M15 5q4 2 3 6" stroke="#c9f2ff" strokeWidth="2" fill="none" /></Emoji>;

function ChatPage() {
  return (
    <Page>
      <Sidebar>
        <SidebarTop>
          <SiOpenai size={50} />
          <PlainButton aria-label="Close sidebar">
            <S size={42} stroke="#afafaf" strokeWidth="3"><rect x="2" y="4" width="36" height="32" rx="7" /><path d="M14 4v32" /></S>
          </PlainButton>
        </SidebarTop>
        <NewChat href="#new"><SquarePen size={41} strokeWidth={1.8} />New chat</NewChat>
        <Account>
          <Avatar>Y</Avatar>
          <AccountText>yoones<small>Free</small></AccountText>
        </Account>
      </Sidebar>
      <Main>
        <MainHeader>
          <ModelButton>ChatGPT<ChevronDown size={42} color="#afafaf" strokeWidth={1.6} /></ModelButton>
          <HeaderActions>
            <ShareButton>
              <S size={44} stroke="#fff" strokeWidth="3" strokeLinecap="round" strokeLinejoin="round"><path d="M20 27V4m-9 9 9-9 9 9M4 25v6q0 5 5 5h22q5 0 5-5v-6" /></S>
              Share
            </ShareButton>
            <PlainButton aria-label="More options"><Dots r={4} gap={14} /></PlainButton>
          </HeaderActions>
        </MainHeader>
        <Scroller>
          <Thread>
            <Bubble>
              {['55060', '55061'].map((port) => (
                <BubbleRow key={port}>
                  <span>TCP</span><span>[::1]:{port}</span><span>[::1]:80</span><span>ESTABLISHED</span><span>19652</span>
                </BubbleRow>
              ))}
            </Bubble>
            <Rtl lang="fa">
              <Para>ممنون، خروجی مشخص کرد که:</Para>
              <Para $bold><CircleEmoji />پورت <En>80</En> توسط برنامه‌ای با <Code>29760</Code> <En>PID</En> اشغال شده.</Para>
              <Rule />
              <Title><CheckEmoji />مرحله بعد: بررسی اینکه <En $size={57} $weight={600}>PID 29760</En> مال کدوم برنامه است</Title>
              <Subtitle><ToolsEmoji />روش ۱: از <En $size={47} $weight={600}>Task Manager</En> (ساده‌ترین راه)</Subtitle>
              <Steps>
                <Step>کلیدهای <Code>Ctrl + Shift + Esc</Code> بزن تا <En>Task Manager</En> باز بشه.</Step>
                <Step>برو به تب <En>"Details"</En>.</Step>
                <Step>ستون <Code>PID</Code> رو پیدا کن (اگه نیست، راست کلیک روی ستون‌ها → گزینه <Code>PID</Code> رو تیک بزن).</Step>
                <Step>دنبال <En>29760</En> بگرد.</Step>
                <Step>ستون <Code>Name</Code> بهت نشون میده که این PID متعلق به چه برنامه‌ایه.</Step>
              </Steps>
              <Rule $top={101} $bottom={106} />
              <Subtitle $gap={20}><LensEmoji />اگه می‌خوای از ترمینال هم پیدا کنی:</Subtitle>
              <Para>دا</Para>
            </Rtl>
          </Thread>
          <ScrollRail aria-hidden="true">
            <svg width="24" height="18"><path d="m12 1 11 16H1z" fill="currentColor" /></svg>
            <ScrollThumb />
          </ScrollRail>
        </Scroller>
        <Dock>
          <ScrollDown aria-label="Scroll to bottom"><ArrowDown size={48} strokeWidth={1.7} /></ScrollDown>
          <Composer>
            <Prompt placeholder="Ask anything" aria-label="Ask anything" />
            <ComposerRow>
              <PlainButton type="button" aria-label="Add"><S size={38} stroke="#fff" strokeWidth="3" strokeLinecap="round"><path d="M20 2v36M2 20h36" /></S></PlainButton>
              <ToolsButton type="button">
                <S size={38} stroke="#fff" strokeWidth="3" strokeLinecap="round"><path d="M2 9h16m12 0h8M2 31h6m12 0h18" /><circle cx="24" cy="9" r="6.500" /><circle cx="14" cy="31" r="6.500" /></S>
                Tools
              </ToolsButton>
              <PlainButton type="button" aria-label="Dictate"><Mic size={46} strokeWidth={1.8} /></PlainButton>
              <VoiceButton type="button" aria-label="Voice mode">
                <S size={38} stroke="#fff" strokeWidth="3.500" strokeLinecap="round"><path d="M4 16v8M14 5v30M25 11v18M36 16v8" /></S>
              </VoiceButton>
            </ComposerRow>
          </Composer>
          <Disclaimer>ChatGPT can make mistakes. Check important info.</Disclaimer>
        </Dock>
      </Main>
    </Page>
  );
}

const columns = [
  { name: 'PID', width: 125, value: '29760' },
  { name: 'Status', width: 200, value: 'Running' },
  { name: 'User name', width: 200, value: 'yoones' },
  { name: 'CPU', width: 100, value: '00', num: true, padRight: 15 },
  { name: 'Memory (ac...', width: 200, value: '7,792 K', num: true },
  { name: 'Architecture', width: 200, value: 'x64' },
  { name: 'Description', width: 200, value: 'Apache HTTP Server' },
];

function TaskManager() {
  return (
    <TaskWindow aria-label="Task Manager">
      <TitleBar>
        <AppName><TMLogo size={40} />Task Manager</AppName>
        <SearchField>
          <Search size={31} strokeWidth={1.8} />
          <SearchInput defaultValue="29760" aria-label="Search processes" />
          <Caret />
          <ClearButton aria-label="Clear search"><X size={34} strokeWidth={1.6} /></ClearButton>
        </SearchField>
        <Caption>
          <CaptionButton aria-label="Minimize"><Minus size={32} strokeWidth={1.6} /></CaptionButton>
          <CaptionButton aria-label="Maximize"><S size={24} stroke="#fff" strokeWidth="4"><rect x="4" y="4" width="32" height="32" rx="4" /></S></CaptionButton>
          <CaptionButton aria-label="Close"><X size={38} strokeWidth={1.4} /></CaptionButton>
        </Caption>
      </TitleBar>
      <WindowBody>
        <SideNav aria-label="Task Manager pages">
          <MenuItem aria-label="Open navigation"><S size={40} stroke="#fff" strokeWidth="2.500"><path d="M2 8h35M2 20h35M2 32h35" /></S></MenuItem>
          {Object.keys(navIcons).map((name) => (
            <NavItem key={name} $active={name === 'Details'}>{navIcons[name]}{name}</NavItem>
          ))}
          <NavItem $last><Settings size={42} strokeWidth={1.5} />Settings</NavItem>
        </SideNav>
        <DetailsPane>
          <PaneBar>
            <PaneTitle>Details</PaneTitle>
            <PaneAction><AddTask />Run new task</PaneAction>
            <PaneDivider />
            <PaneAction><S size={36} stroke="#fff" strokeWidth="3"><circle cx="20" cy="20" r="17" /><path d="M8 32 32 8" /></S>End task</PaneAction>
            <MoreButton aria-label="More actions"><Dots r={4} gap={16} /></MoreButton>
          </PaneBar>
          <TableArea>
            <ProcessTable>
              <colgroup>
                <col style={{ width: 249 }} />
                {columns.map((c) => <col key={c.name} style={{ width: c.width }} />)}
              </colgroup>
              <thead>
                <tr>
                  <Head><NameHead>Name<ChevronUp size={22} strokeWidth={1.5} color="#aaa" /></NameHead></Head>
                  {columns.map((c) => <Head key={c.name} $num={c.num}>{c.name}</Head>)}
                </tr>
              </thead>
              <tbody>
                <tr>
                  <Cell>
                    <ProcessName>
                      <S size={36}><path d="m2 1 5 5" stroke="#f4ee18" strokeWidth="5" /><path d="m6 6 26 28" stroke="#e60032" strokeWidth="9" /><path d="m7 7 25 27" stroke="#f0f" strokeWidth="5" /><path d="m8 9 24 25" stroke="#40207c" strokeWidth="2" strokeDasharray="5 3" /></S>
                      httpd.exe
                    </ProcessName>
                  </Cell>
                  {columns.map((c) => <Cell key={c.name} $num={c.num} $padRight={c.padRight}>{c.value}</Cell>)}
                </tr>
                <tr aria-hidden="true"><Cell $fill />{columns.map((c) => <Cell $fill key={c.name} />)}</tr>
              </tbody>
            </ProcessTable>
          </TableArea>
          <HScroll />
        </DetailsPane>
      </WindowBody>
    </TaskWindow>
  );
}

function SystemBar() {
  return (
    <Taskbar>
      <Widget aria-label="Weather, 5 alerts">
        <svg width="70" height="62" viewBox="0 0 70 62">
          <defs><linearGradient id="cl" x1="0" y1="0" x2="0" y2="1"><stop stopColor="#a9c6f7" /><stop offset=".7" stopColor="#dbe7fb" /><stop offset="1" stopColor="#86a9ec" /></linearGradient></defs>
          <path d="M16 60C-4 60-2 38 12 38c0-20 28-24 34-4 18-2 20 26 2 26z" fill="url(#cl)" />
          <circle cx="49" cy="21" r="20" fill="#ff99a4" />
          <text x="49" y="31" textAnchor="middle" fontFamily="Open Sans" fontSize="27" fill="#000">5</text>
        </svg>
      </Widget>
      <Apps>
        {apps.map(([name, icon, running, active]) => (
          <AppButton key={name} aria-label={name} $running={running} $active={active}>{icon}</AppButton>
        ))}
      </Apps>
      <Tray>
        <TrayItem $gap={42} aria-label="Show hidden icons"><ChevronUp size={38} strokeWidth={2} /></TrayItem>
        <TrayItem $gap={46} aria-label="OneDrive"><TrayCloud /></TrayItem>
        <TrayItem $gap={46}>ENG</TrayItem>
        <TrayItem aria-label="Network"><Wifi /></TrayItem>
        <TrayItem aria-label="Volume"><Volume /></TrayItem>
        <TrayItem aria-label="Battery"><Battery /></TrayItem>
        <Clock>5:50 PM<br />7/30/2025</Clock>
      </Tray>
    </Taskbar>
  );
}

export default function App() {
  return (
    <Desktop>
      <GlobalStyle />
      <BrowserChrome />
      <ChatPage />
      <TaskManager />
      <SystemBar />
    </Desktop>
  );
}
